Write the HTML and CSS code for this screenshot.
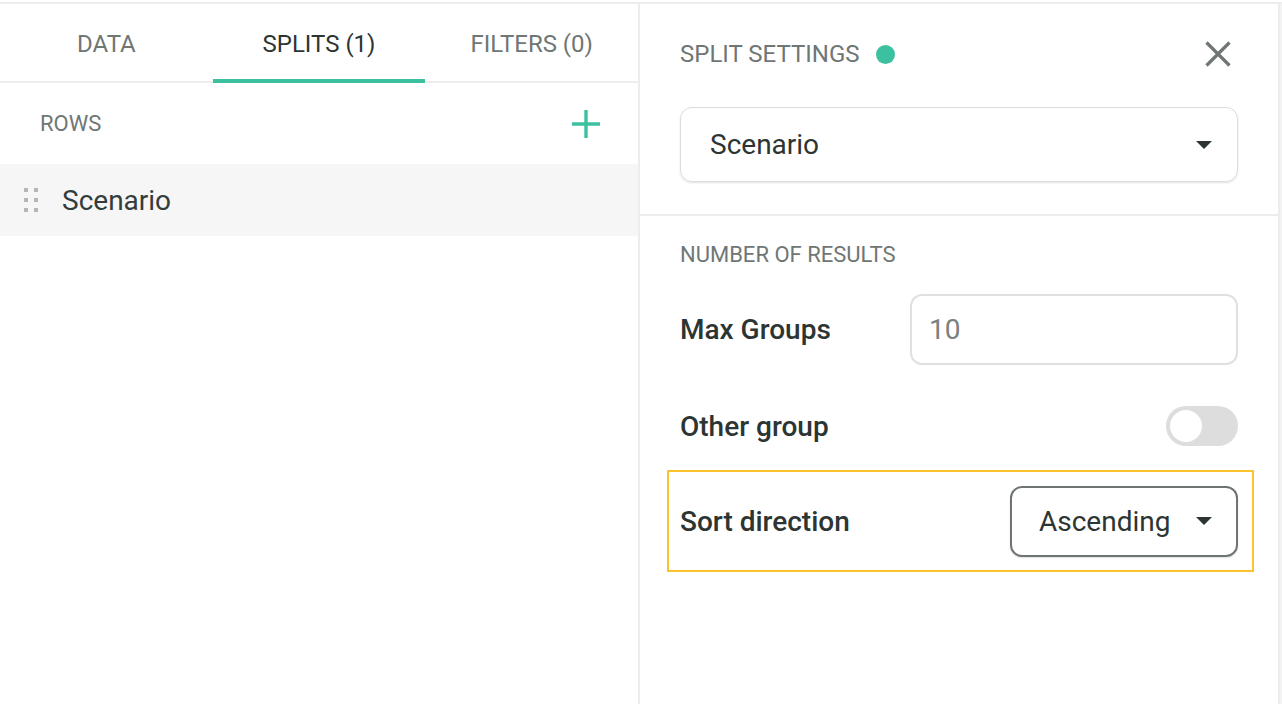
FILE: index.html
```html
<!DOCTYPE html>
<html lang="en">
<head>
    <meta charset="UTF-8">
    <meta name="viewport" content="width=device-width, initial-scale=1.0">
    <title>Split settings</title>
    <link rel="stylesheet" href="styles.css">
</head>
<body>
    <div class="layout">
        <div class="sidebar">
            <div class="tabs">
                <div class="tab">DATA</div>
                <div class="tab active">SPLITS (1)</div>
                <div class="tab">FILTERS (0)</div>
            </div>
            <div class="section-head">
                <span class="caption">ROWS</span>
                <svg class="add" width="28" height="28" viewBox="0 0 28 28">
                    <path d="M14 0v28M0 14h28" stroke="#3bc1a0" stroke-width="3.4" fill="none"/>
                </svg>
            </div>
            <div class="split-row">
                <span class="grip">
                    <i></i><i></i><i></i><i></i><i></i><i></i>
                </span>
                <span>Scenario</span>
            </div>
        </div>

        <div class="settings">
            <div class="settings-top">
                <div class="settings-head">
                    <span class="caption big">SPLIT SETTINGS</span>
                    <span class="dot"></span>
                    <svg class="close" width="26" height="26" viewBox="0 0 26 26">
                        <path d="M1.5 1.5l23 23M24.5 1.5l-23 23" stroke="#6f7674" stroke-width="3.2" fill="none"/>
                    </svg>
                </div>
                <div class="select wide">
                    <span>Scenario</span>
                    <span class="caret"></span>
                </div>
            </div>

            <div class="settings-body">
                <div class="caption">NUMBER OF RESULTS</div>
                <div class="field max-groups">
                    <label>Max Groups</label>
                    <div class="input">10</div>
                </div>
                <div class="field other-group">
                    <label>Other group</label>
                    <div class="toggle"><span class="knob"></span></div>
                </div>
                <div class="field highlight">
                    <label>Sort direction</label>
                    <div class="select small">
                        <span>Ascending</span>
                        <span class="caret"></span>
                    </div>
                </div>
            </div>
        </div>
        <div class="edge"></div>
    </div>
</body>
</html>
```

FILE: styles.css
```css
* {
    margin: 0;
    padding: 0;
    box-sizing: border-box;
}

body {
    font-family: Roboto, "Liberation Sans", Arial, sans-serif;
    background-color: #fff;
    color: #2d3533;
    height: 100vh;
    overflow: hidden;
}

.layout {
    display: flex;
    height: 702px;
    border-top: 2px solid #ededed;
    margin-top: 2px;
}

.caption {
    font-size: 22px;
    line-height: 26px;
    color: #6f7674;
}

.caption.big {
    font-size: 24px;
}

/* left column */
.sidebar {
    width: 640px;
    border-right: 2px solid #ededed;
}

.tabs {
    display: flex;
    height: 79px;
    border-bottom: 2px solid #ededed;
}

.tab {
    flex: 1;
    display: flex;
    align-items: center;
    justify-content: center;
    font-size: 24px;
    color: #6f7674;
    padding-top: 5px;
    border-bottom: 4px solid transparent;
    margin-bottom: -2px;
}

.tab.active {
    color: #2d3533;
    border-bottom-color: #3bc1a0;
}

.section-head {
    display: flex;
    align-items: center;
    justify-content: space-between;
    height: 81px;
    padding: 0 38px 0 40px;
}

.split-row {
    display: flex;
    align-items: center;
    height: 72px;
    background-color: #f6f6f6;
    padding-left: 24px;
    font-size: 28px;
    color: #333d3b;
}

.grip {
    display: grid;
    grid-template-columns: 4px 4px;
    gap: 6px;
    margin-right: 24px;
}

.grip i {
    width: 4px;
    height: 4px;
    background-color: #b3b8b6;
}

/* right column */
.settings {
    width: 638px;
}

.settings-top {
    padding: 0 40px;
    height: 212px;
    border-bottom: 2px solid #ededed;
}

.settings-head {
    display: flex;
    align-items: center;
    height: 100px;
    margin-bottom: 3px;
}

.dot {
    width: 19px;
    height: 19px;
    border-radius: 50%;
    background-color: #3bc1a0;
    margin-left: 16px;
}

.close {
    margin-left: auto;
    margin-right: 7px;
}

.select {
    display: flex;
    align-items: center;
    justify-content: space-between;
    border-radius: 12px;
    font-size: 28px;
    color: #2d3533;
}

.select.wide {
    height: 75px;
    padding: 0 25px 0 29px;
    border: 1px solid #dcdcdc;
    box-shadow: 0 1px 2px rgba(0, 0, 0, 0.12);
}

.caret {
    width: 0;
    height: 0;
    border-left: 8.5px solid transparent;
    border-right: 8.5px solid transparent;
    border-top: 8px solid #2d3533;
}

.settings-body {
    padding: 26px 40px 0 40px;
}

.field {
    display: flex;
    align-items: center;
    justify-content: space-between;
    font-size: 28px;
    font-weight: 500;
}

.max-groups {
    margin-top: 26px;
}

.other-group {
    margin-top: 41px;
}

.input {
    width: 328px;
    height: 71px;
    border: 2px solid #e0e0e0;
    border-radius: 12px;
    padding-left: 17px;
    display: flex;
    align-items: center;
    font-weight: 400;
    color: #7a807e;
}

.toggle {
    width: 72px;
    height: 40px;
    border-radius: 20px;
    background-color: #dcdddc;
    padding: 4px;
}

.knob {
    display: block;
    width: 32px;
    height: 32px;
    border-radius: 50%;
    background-color: #fff;
}

.field.highlight {
    margin: 24px -16px 0 -13px;
    height: 102px;
    padding: 0 14px 0 11px;
    border: 2px solid #fcc32e;
}

.select.small {
    width: 228px;
    height: 71px;
    padding: 0 24px 0 27px;
    border: 2px solid #6d7472;
    font-weight: 400;
    box-shadow: 0 1px 2px rgba(0, 0, 0, 0.12);
}

.edge {
    flex: 1;
    border-left: 2px solid #ededed;
    background-color: #f3f3f3;
}
```
